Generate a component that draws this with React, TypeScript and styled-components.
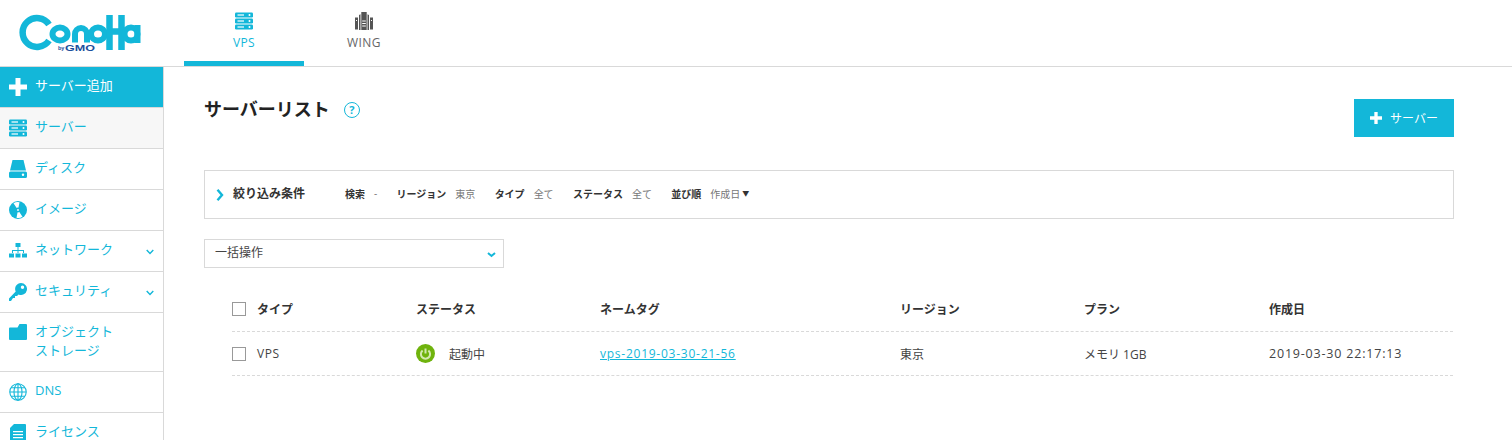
import React from "react";
import styled, { createGlobalStyle } from "styled-components";

const BLUE = "#13b7d9";
const LINE = "#d9d9d9";
const FONT = `"Open Sans", "Noto Sans CJK JP", sans-serif`;

const GlobalStyle = createGlobalStyle`
  html, body {
    margin: 0;
    padding: 0;
    height: 440px;
    overflow: hidden;
    background: #fff;
    font-family: ${FONT};
    color: #333;
  }
  * { box-sizing: border-box; }
`;

const Page = styled.div`
  width: 1512px;
  height: 440px;
  overflow: hidden;
  display: flex;
  flex-direction: column;
`;

const Header = styled.header`
  height: 67px;
  flex: none;
  display: flex;
  border-bottom: 1px solid ${LINE};
`;

const LogoBox = styled.div`
  width: 184px;
  flex: none;
  padding: 14px 0 0 19px;
`;

const Tab = styled.div<{ $active?: boolean }>`
  width: 120px;
  height: 66px;
  padding-top: 12px;
  display: flex;
  flex-direction: column;
  align-items: center;
  gap: 5px;
  font-size: 12px;
  letter-spacing: 0.4px;
  line-height: 16px;
  color: ${(p) => (p.$active ? BLUE : "#666")};
  border-bottom: ${(p) => (p.$active ? `5px solid ${BLUE}` : "none")};
`;

const Body = styled.div`
  flex: 1;
  display: flex;
  min-height: 0;
`;

const Sidebar = styled.nav`
  width: 164px;
  flex: none;
  border-right: 1px solid ${LINE};
`;

const NavItem = styled.div<{ $tall?: boolean; $variant?: "add" | "current" }>`
  height: ${(p) => (p.$tall ? "59px" : "41px")};
  display: flex;
  align-items: ${(p) => (p.$tall ? "flex-start" : "center")};
  padding: ${(p) => (p.$tall ? "9px 0 0 9px" : "0 0 0 9px")};
  gap: 9px;
  font-size: 13px;
  line-height: 19px;
  color: ${(p) => (p.$variant === "add" ? "#fff" : BLUE)};
  background: ${(p) =>
    p.$variant === "add" ? BLUE : p.$variant === "current" ? "#f7f7f7" : "#fff"};
  border-bottom: 1px solid ${LINE};
`;

const NavIcon = styled.svg<{ $outline?: boolean }>`
  width: 18px;
  height: 18px;
  flex: none;
  fill: ${(p) => (p.$outline ? "none" : BLUE)};
  stroke: ${(p) => (p.$outline ? BLUE : "none")};
  stroke-width: ${(p) => (p.$outline ? 1.1 : 0)};
`;

const FolderIcon = styled(NavIcon)`
  height: 16px;
  margin-top: 2px;
`;

const NavLabel = styled.span`
  flex: 1;
  padding-bottom: 4px;
  margin-left: -1px;
`;

const NavChevron = styled.svg`
  width: 8px;
  height: 6px;
  margin-right: 9px;
  margin-top: 2px;
  fill: none;
  stroke: ${BLUE};
  stroke-width: 1.4;
`;

const Main = styled.main`
  flex: 1;
  padding: 32px 58px 0 40px;
  min-width: 0;
`;

const TitleRow = styled.div`
  display: flex;
  align-items: flex-start;
  justify-content: space-between;
  height: 71px;
`;

const TitleGroup = styled.div`
  display: flex;
  align-items: center;
  gap: 15px;
  height: 24px;
`;

const Title = styled.h1`
  margin: 0 0 4px;
  font-size: 18px;
  font-weight: 700;
  line-height: 24px;
  color: #222;
`;

const HelpMark = styled.span`
  width: 16px;
  height: 16px;
  margin: 0 0 2px -1px;
  border: 1.5px solid ${BLUE};
  border-radius: 50%;
  color: ${BLUE};
  font-size: 11px;
  font-weight: 700;
  line-height: 13px;
  text-align: center;
`;

const AddButton = styled.button`
  width: 100px;
  height: 38px;
  border: none;
  background: ${BLUE};
  color: #fff;
  font-family: ${FONT};
  font-size: 12px;
  display: flex;
  align-items: center;
  justify-content: center;
  gap: 8px;
  padding: 0;
`;

const PlusIcon = styled.svg<{ $large?: boolean }>`
  width: ${(p) => (p.$large ? 18 : 12)}px;
  height: ${(p) => (p.$large ? 18 : 12)}px;
  flex: none;
  fill: #fff;
`;

const FilterBox = styled.div`
  height: 49px;
  border: 1px solid ${LINE};
  display: flex;
  align-items: center;
  padding: 0 0 3px 11px;
`;

const FilterChevron = styled.svg`
  width: 8px;
  height: 12px;
  margin: 3px 9px 0 0;
  fill: none;
  stroke: ${BLUE};
  stroke-width: 2.4;
`;

const FilterTitle = styled.strong`
  width: 112px;
  font-size: 12px;
  color: #333;
`;

const FilterItem = styled.span`
  display: flex;
  align-items: center;
  gap: 9px;
  font-size: 10px;
  color: #777;
  margin-right: 19.3px;
`;

const FilterName = styled.b`
  color: #333;
`;

const SortMark = styled.span`
  color: #333;
  font-size: 7px;
  margin-left: -7px;
`;

const Select = styled.div`
  width: 300px;
  height: 29px;
  margin-top: 20px;
  border: 1px solid ${LINE};
  display: flex;
  align-items: center;
  justify-content: space-between;
  padding: 0 7px 3px 10px;
  font-size: 12px;
  color: #444;
`;

const SelectChevron = styled.svg`
  width: 9px;
  height: 6px;
  margin-top: 5px;
  fill: none;
  stroke: ${BLUE};
  stroke-width: 2;
`;

const Table = styled.div`
  margin: 20px 1px 0 28px;
`;

const Row = styled.div<{ $header?: boolean }>`
  display: grid;
  grid-template-columns: 184px 184px 300px 184px 185px 1fr;
  align-items: center;
  height: 44px;
  padding-bottom: ${(p) => (p.$header ? "2px" : "0")};
  border-bottom: 1px dashed ${LINE};
  font-size: 12px;
  font-weight: ${(p) => (p.$header ? 700 : 400)};
  color: ${(p) => (p.$header ? "#333" : "#444")};
`;

const CheckCell = styled.div`
  display: flex;
  align-items: center;
  gap: 11px;
`;

const CheckBox = styled.span`
  width: 14px;
  height: 14px;
  border: 1px solid #999;
  background: #fff;
`;

const TypeName = styled.span`
  letter-spacing: 0.6px;
`;

const StatusCell = styled.div`
  display: flex;
  align-items: center;
  gap: 14px;
`;

const PowerIcon = styled.svg`
  width: 19px;
  height: 19px;
`;

const TagLink = styled.a`
  color: ${BLUE};
  text-decoration: underline;
  letter-spacing: 0.75px;
`;

const DateCell = styled.div`
  font-size: 12.5px;
  letter-spacing: 0.8px;
`;

const TabIcon = styled.svg<{ $color: string }>`
  width: 18px;
  height: 18px;
  flex: none;
  fill: ${(p) => p.$color};
`;

function ServerGlyph() {
  const rows = [0.5, 6.5, 12.5];
  return (
    <>
      {rows.map((y) => (
        <g key={y}>
          <rect x="0" y={y} width="18" height="5" rx="1.2" />
          <rect x="2.5" y={y + 1.9} width="6.5" height="1.2" fill="#fff" />
          <circle cx="14.5" cy={y + 2.5} r="1" fill="#fff" />
        </g>
      ))}
    </>
  );
}

function Logo() {
  return (
    <svg width="124" height="38" viewBox="0 0 124 38" style={{ display: "block" }}>
      <g fill="none" stroke={BLUE} strokeWidth="6">
        <path d="M30 10.5A14.4 14.4 0 1 0 30 26.5" strokeWidth="6.5" />
        <ellipse cx="41" cy="20" rx="7.5" ry="6.5" />
        <path d="M56 28.5V20a6 6 0 0 1 12 0V28.5" />
        <ellipse cx="79" cy="20" rx="7" ry="6.5" />
        <path d="M90.5 1v35M102.5 1v35M90 17.5h13" strokeWidth="6.5" />
        <ellipse cx="112" cy="20" rx="6.5" ry="6.5" />
        <path d="M118.5 11v18" />
      </g>
      <text x="39" y="36" fontFamily="'Liberation Sans', sans-serif" fontSize="5.5" fontWeight="700" fill="#1b4f9c">
        by
      </text>
      <text
        x="46"
        y="36.5"
        fontFamily="'Liberation Sans', sans-serif"
        fontSize="9.5"
        fontWeight="700"
        fill="#1b4f9c"
        textLength="30"
        lengthAdjust="spacingAndGlyphs"
      >
        GMO
      </text>
    </svg>
  );
}

function Chevron() {
  return (
    <NavChevron viewBox="0 0 8 6">
      <path d="M.7 1 4 4.5 7.3 1" />
    </NavChevron>
  );
}

export default function App() {
  return (
    <Page>
      <GlobalStyle />
      <Header>
        <LogoBox>
          <Logo />
        </LogoBox>
        <Tab $active>
          <TabIcon $color={BLUE} viewBox="0 0 18 18">
            <ServerGlyph />
          </TabIcon>
          VPS
        </Tab>
        <Tab>
          <TabIcon $color="#555" viewBox="0 0 18 18">
            <path d="M0 5.5h3v12H0zM15 5.5h3v12h-3z" />
            <path d="M4 3l1.5-.7V18H4zM12.5 2.3 14 3v15h-1.5z" />
            <path d="M6.3 0h5.4v18H6.3z" />
            <path d="M7.2 8.5h3.6v1H7.2zM7.2 11h3.6v1H7.2zM7.2 13.5h3.6v1H7.2zM1 8h1v1H1zM16 8h1v1h-1z" fill="#fff" />
          </TabIcon>
          WING
        </Tab>
      </Header>
      <Body>
        <Sidebar>
          <NavItem $variant="add">
            <PlusIcon $large viewBox="0 0 18 18">
              <path d="M6.5 0h5v6.5H18v5h-6.5V18h-5v-6.5H0v-5h6.5z" />
            </PlusIcon>
            <NavLabel>サーバー追加</NavLabel>
          </NavItem>
          <NavItem $variant="current">
            <NavIcon viewBox="0 0 18 18">
              <ServerGlyph />
            </NavIcon>
            <NavLabel>サーバー</NavLabel>
          </NavItem>
          <NavItem>
            <NavIcon viewBox="0 0 18 18">
              <path d="M3.5 0h11L17 10.5H1zM1.5 11.5h15A1.5 1.5 0 0 1 18 13v3.5a1.5 1.5 0 0 1-1.5 1.5h-15A1.5 1.5 0 0 1 0 16.5V13a1.5 1.5 0 0 1 1.5-1.5z" />
              <circle cx="14" cy="14.8" r="1.2" fill="#fff" />
            </NavIcon>
            <NavLabel>ディスク</NavLabel>
          </NavItem>
          <NavItem>
            <NavIcon viewBox="0 0 18 18">
              <circle cx="9" cy="9" r="9" />
              <path d="M9 9 4.5 2.2A8 8 0 0 1 10.5 1.2zM9 9l4.5 6.8A8 8 0 0 1 7.5 16.8z" fill="#fff" />
              <circle cx="9" cy="9" r="2.4" />
              <circle cx="9" cy="9" r="0.9" fill="#fff" />
            </NavIcon>
            <NavLabel>イメージ</NavLabel>
          </NavItem>
          <NavItem>
            <NavIcon viewBox="0 0 18 18">
              <path d="M6.5 1h5v4h-5zM8.5 5h1v3h5.5v3h-1V9H9.5v2h-1V9H4v2H3V8h5.5zM0 11.5h5v4H0zM6.5 11.5h5v4h-5zM13 11.5h5v4h-5z" />
            </NavIcon>
            <NavLabel>ネットワーク</NavLabel>
            <Chevron />
          </NavItem>
          <NavItem>
            <NavIcon viewBox="0 0 18 18">
              <path
                fillRule="evenodd"
                d="M12 0a6 6 0 1 1-2.4 11.5L8 13H6v2H4l-2 3H0v-2.5L6.7 8.6A6 6 0 0 1 12 0zM13.5 2.5a1.7 1.7 0 1 0 0 3.4 1.7 1.7 0 0 0 0-3.400z"
              />
            </NavIcon>
            <NavLabel>セキュリティ</NavLabel>
            <Chevron />
          </NavItem>
          <NavItem $tall>
            <FolderIcon viewBox="0 0 18 16">
              <path d="M0 4.5a1 1 0 0 1 1-1h7.500L10.500 0H17a1 1 0 0 1 1 1v14a1 1 0 0 1-1 1H1a1 1 0 0 1-1-1z" />
            </FolderIcon>
            <NavLabel>
              オブジェクト
              <br />
              ストレージ
            </NavLabel>
          </NavItem>
          <NavItem>
            <NavIcon $outline viewBox="0 0 18 18">
              <circle cx="9" cy="9" r="8.2" />
              <ellipse cx="9" cy="9" rx="4" ry="8.2" />
              <path d="M9 .8v16.4M.8 9h16.4M2 4.8h14M2 13.2h14" />
            </NavIcon>
            <NavLabel>DNS</NavLabel>
          </NavItem>
          <NavItem>
            <NavIcon viewBox="0 0 18 18">
              <path d="M5 0h11a1 1 0 0 1 1 1v16a1 1 0 0 1-1 1H2a1 1 0 0 1-1-1V4z" />
              <path d="M4 7h10v1.2H4zM4 10h10v1.2H4zM4 13h10v1.2H4z" fill="#fff" />
            </NavIcon>
            <NavLabel>ライセンス</NavLabel>
          </NavItem>
        </Sidebar>
        <Main>
          <TitleRow>
            <TitleGroup>
              <Title>サーバーリスト</Title>
              <HelpMark>?</HelpMark>
            </TitleGroup>
            <AddButton>
              <PlusIcon viewBox="0 0 18 18">
                <path d="M6.5 0h5v6.5H18v5h-6.5V18h-5v-6.5H0v-5h6.5z" />
              </PlusIcon>
              サーバー
            </AddButton>
          </TitleRow>
          <FilterBox>
            <FilterChevron viewBox="0 0 8 12">
              <path d="M1.5 0.8 6 6l-4.5 5.2" />
            </FilterChevron>
            <FilterTitle>絞り込み条件</FilterTitle>
            <FilterItem>
              <FilterName>検索</FilterName>-
            </FilterItem>
            <FilterItem>
              <FilterName>リージョン</FilterName>東京
            </FilterItem>
            <FilterItem>
              <FilterName>タイプ</FilterName>全て
            </FilterItem>
            <FilterItem>
              <FilterName>ステータス</FilterName>全て
            </FilterItem>
            <FilterItem>
              <FilterName>並び順</FilterName>作成日
              <SortMark>▼</SortMark>
            </FilterItem>
          </FilterBox>
          <Select>
            一括操作
            <SelectChevron viewBox="0 0 9 6">
              <path d="M1 1l3.5 3L8 1" />
            </SelectChevron>
          </Select>
          <Table>
            <Row $header>
              <CheckCell>
                <CheckBox />
                タイプ
              </CheckCell>
              <div>ステータス</div>
              <div>ネームタグ</div>
              <div>リージョン</div>
              <div>プラン</div>
              <div>作成日</div>
            </Row>
            <Row>
              <CheckCell>
                <CheckBox />
                <TypeName>VPS</TypeName>
              </CheckCell>
              <StatusCell>
                <PowerIcon viewBox="0 0 19 19">
                  <circle cx="9.5" cy="9.5" r="9.5" fill="#6fb30d" />
                  <path
                    d="M6.6 6.5a4.6 4.6 0 1 0 5.8 0M9.5 4.5v5"
                    fill="none"
                    stroke="#d3e9b0"
                    strokeWidth="2"
                  />
                </PowerIcon>
                起動中
              </StatusCell>
              <div>
                <TagLink href="#">vps-2019-03-30-21-56</TagLink>
              </div>
              <div>東京</div>
              <div>メモリ 1GB</div>
              <DateCell>2019-03-30 22:17:13</DateCell>
            </Row>
          </Table>
        </Main>
      </Body>
    </Page>
  );
}
